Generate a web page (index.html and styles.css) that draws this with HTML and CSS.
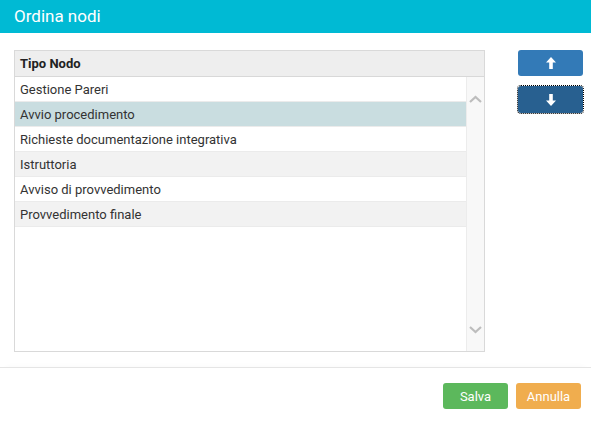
FILE: index.html
```html
<!DOCTYPE html>
<html lang="it">
<head>
<meta charset="utf-8">
<title>Ordina nodi</title>
<link rel="stylesheet" href="styles.css">
</head>
<body>
<div class="dialog">
  <div class="titlebar">Ordina nodi</div>
  <div class="content">
    <div class="grid">
      <div class="grid-head">Tipo Nodo</div>
      <div class="grid-body">
        <div class="rows">
          <div class="row">Gestione Pareri</div>
          <div class="row selected">Avvio procedimento</div>
          <div class="row">Richieste documentazione integrativa</div>
          <div class="row alt">Istruttoria</div>
          <div class="row">Avviso di provvedimento</div>
          <div class="row alt">Provvedimento finale</div>
        </div>
        <div class="scrollbar">
          <svg class="chev" width="13" height="8" viewBox="0 0 13 8"><path d="M1 7 L6.5 2 L12 7" fill="none" stroke="#bdbdbd" stroke-width="2.2"/></svg>
          <svg class="chev" width="13" height="8" viewBox="0 0 13 8"><path d="M1 1 L6.5 6 L12 1" fill="none" stroke="#bdbdbd" stroke-width="2.2"/></svg>
        </div>
      </div>
    </div>
    <div class="movers">
      <button class="btn btn-up" type="button">
        <svg width="10" height="12" viewBox="0 0 10 12"><path d="M5 0 L10 5.5 L6.8 5.5 L6.8 12 L3.2 12 L3.2 5.5 L0 5.5 Z" fill="#fff"/></svg>
      </button>
      <button class="btn btn-down" type="button">
        <svg width="10" height="12" viewBox="0 0 10 12"><path d="M5 12 L10 6.5 L6.8 6.5 L6.8 0 L3.2 0 L3.2 6.5 L0 6.5 Z" fill="#fff"/></svg>
      </button>
    </div>
  </div>
  <div class="footer">
    <button class="btn btn-save" type="button">Salva</button>
    <button class="btn btn-cancel" type="button">Annulla</button>
  </div>
</div>
</body>
</html>
```
FILE: styles.css
```css
* { box-sizing: border-box; }
html, body { margin: 0; padding: 0; background: #fff; }
body { font-family: Roboto, "Liberation Sans", Arial, sans-serif; color: #333; width: 591px; height: 422px; overflow: hidden; }
.dialog { display: flex; flex-direction: column; height: 422px; }
.titlebar {
  height: 33px;
  background: #00bad4;
  color: #fff;
  font-size: 17px;
  line-height: 33px;
  padding-left: 14px;
}
.content {
  display: flex;
  align-items: flex-start;
  padding: 17px 0 0 14px;
  height: 334px;
}
.grid {
  width: 471px;
  height: 302px;
  border: 1px solid #d9d9d9;
  display: flex;
  flex-direction: column;
}
.grid-head {
  height: 26px;
  background: #eeeeee;
  border-bottom: 1px solid #d8d8d8;
  font-size: 13px;
  font-weight: 700;
  line-height: 25px;
  padding-left: 5px;
  color: #222;
}
.grid-body { flex: 1; display: flex; }
.rows { flex: 1; }
.row {
  height: 25px;
  border-bottom: 1px solid #ebebeb;
  font-size: 13px;
  line-height: 24px;
  padding: 1px 0 0 5px;
  color: #333;
  background: #fff;
}
.row.alt { background: #f2f2f2; }
.row.selected { background: #c9dde0; }
.scrollbar {
  width: 18px;
  background: #f8f8f8;
  border-left: 1px solid #ececec;
  display: flex;
  flex-direction: column;
  justify-content: space-between;
  align-items: center;
  padding: 18px 0 17px;
}
.movers {
  margin-left: 33px;
  display: flex;
  flex-direction: column;
  gap: 10px;
}
.btn {
  border: 0;
  border-radius: 3px;
  color: #fff;
  font-family: Roboto, "Liberation Sans", Arial, sans-serif;
  font-size: 13px;
  padding: 0;
  display: flex;
  align-items: center;
  justify-content: center;
  cursor: pointer;
}
.btn-up, .btn-down { width: 65px; height: 26px; }
.btn-up { background: #337ab7; }
.btn-down { background: #286090; outline: 1px dotted #000; outline-offset: 0; height: 27px; }
.footer {
  border-top: 1px solid #e5e5e5;
  display: flex;
  justify-content: flex-end;
  gap: 8px;
  padding: 15px 10px 0 0;
  flex: 1;
  box-shadow: 0 -6px 6px -6px rgba(0,0,0,0.03);
}
.btn-save { width: 65px; height: 26px; background: #5cb85c; }
.btn-cancel { width: 65px; height: 26px; background: #f0ad4e; }
```
